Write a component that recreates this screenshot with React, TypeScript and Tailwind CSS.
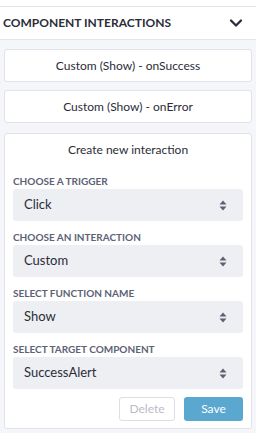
import { ChevronDown } from "lucide-react";

const fields = [
  { label: "Choose a trigger", value: "Click" },
  { label: "Choose an interaction", value: "Custom" },
  { label: "Select function name", value: "Show" },
  { label: "Select target component", value: "SuccessAlert" },
];

function SortIcon() {
  return (
    <svg width="8" height="11" viewBox="0 0 8 11" className="shrink-0">
      <path d="M4 0.5 L7.5 4.5 H0.5 Z" fill="#5b6072" />
      <path d="M4 10.5 L7.5 6.5 H0.5 Z" fill="#5b6072" />
    </svg>
  );
}

function Select({ label, value }: { label: string; value: string }) {
  return (
    <div className="flex flex-col">
      <div className="h-4 text-[10px] leading-4 font-bold uppercase text-[#5d6274]">{label}</div>
      <div className="flex h-8 items-center justify-between rounded-[3px] bg-[#eeeff3] pl-[11px] pr-[16px] text-[13px] text-[#2a2d38]">
        <span>{value}</span>
        <SortIcon />
      </div>
    </div>
  );
}

export default function App() {
  return (
    <div
      className="flex h-[433px] w-[256px] flex-col overflow-hidden bg-white pt-[6px]"
      style={{ fontFamily: "Lato, 'Liberation Sans', sans-serif" }}
    >
      <div className="flex h-[34px] items-center justify-between border-y border-[#e3e5ea] bg-white pl-[3px] pr-[10px]">
        <span className="text-[12px] font-bold text-[#2b2e3a]">COMPONENT INTERACTIONS</span>
        <ChevronDown size={20} strokeWidth={2.75} className="text-[#2b2e3a]" />
      </div>

      <div className="flex flex-1 flex-col bg-[#f5f6f9] px-[4px] pt-[9px]">
        <div className="flex h-[33px] items-center justify-center rounded-[3px] border border-[#e1e3e8] bg-white text-[12px] text-[#2a2d38]">
          Custom (Show) - onSuccess
        </div>
        <div className="mt-2 flex h-[33px] items-center justify-center rounded-[3px] border border-[#e1e3e8] bg-white text-[12px] text-[#2a2d38]">
          Custom (Show) - onError
        </div>

        <div className="mt-[10px] flex flex-col rounded-[3px] border border-[#e1e3e8] bg-white px-2 pb-[7px] pt-[6px]">
          <div className="h-5 text-center text-[12px] leading-5 text-[#2a2d38]">Create new interaction</div>
          <div className="mt-[13px] flex flex-col gap-2">
            {fields.map((f) => (
              <Select key={f.label} label={f.label} value={f.value} />
            ))}
          </div>
          <div className="mt-2 flex justify-end gap-[9px]">
            <button className="h-6 w-[56px] rounded-[3px] border border-[#dcdee4] bg-white text-[12px] text-[#b9bcc7]">
              Delete
            </button>
            <button className="h-6 w-[59px] rounded-[3px] bg-[#5aa8cf] text-[12px] text-white">Save</button>
          </div>
        </div>
      </div>
    </div>
  );
}
